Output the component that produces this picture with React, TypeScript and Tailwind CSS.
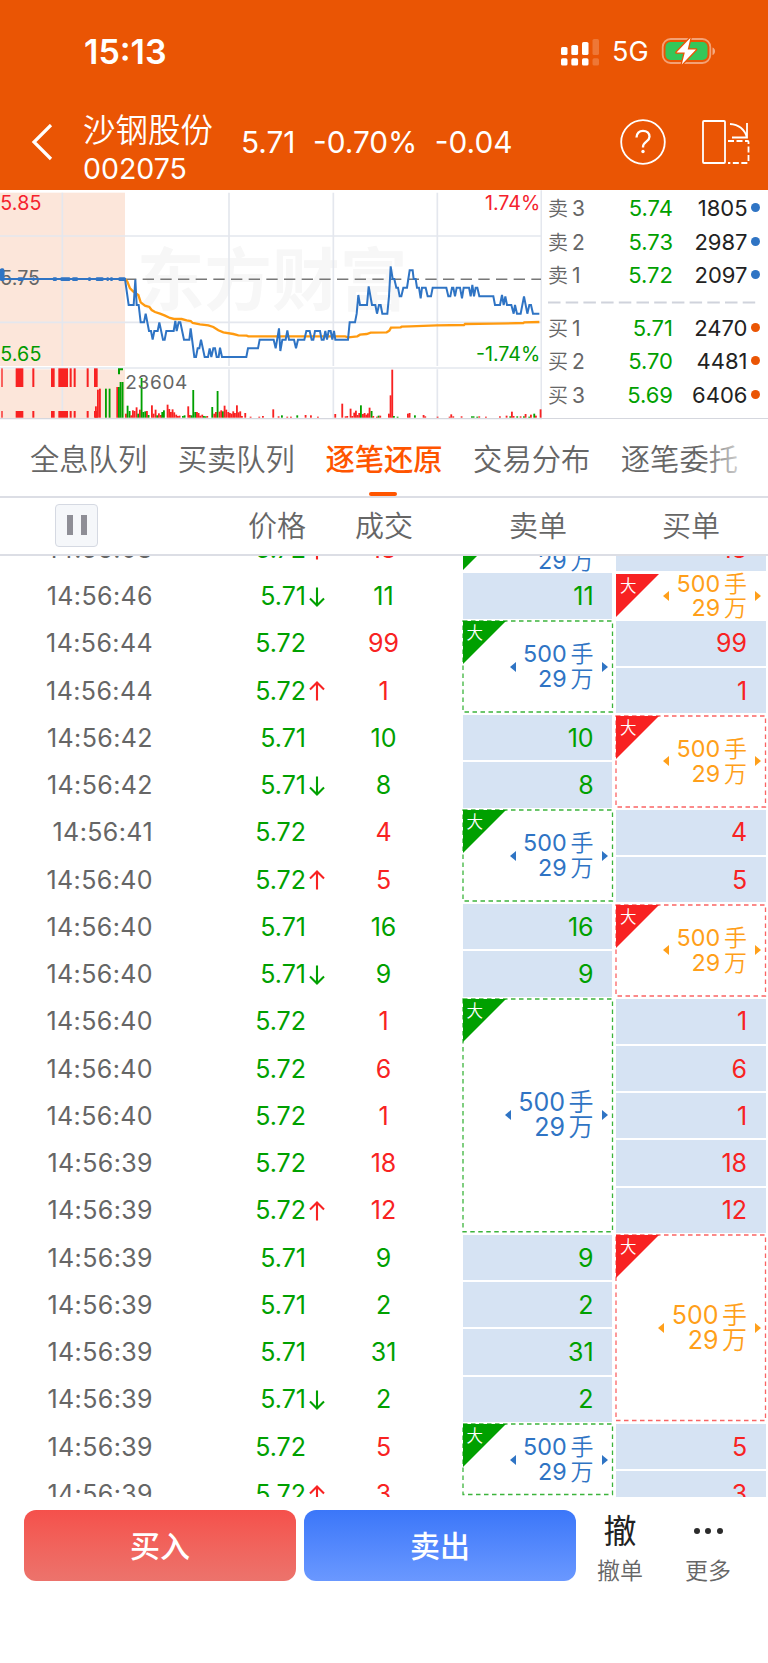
import { Fragment } from "react"

type Trade = { time: string; price: string; dir?: "up" | "down"; qty: string; side: "buy" | "sell" }

const trades: Trade[] = [
  { time: "14:56:08", price: "5.72", dir: "up", qty: "18", side: "buy" },
  { time: "14:56:46", price: "5.71", dir: "down", qty: "11", side: "sell" },
  { time: "14:56:44", price: "5.72", qty: "99", side: "buy" },
  { time: "14:56:44", price: "5.72", dir: "up", qty: "1", side: "buy" },
  { time: "14:56:42", price: "5.71", qty: "10", side: "sell" },
  { time: "14:56:42", price: "5.71", dir: "down", qty: "8", side: "sell" },
  { time: "14:56:41", price: "5.72", qty: "4", side: "buy" },
  { time: "14:56:40", price: "5.72", dir: "up", qty: "5", side: "buy" },
  { time: "14:56:40", price: "5.71", qty: "16", side: "sell" },
  { time: "14:56:40", price: "5.71", dir: "down", qty: "9", side: "sell" },
  { time: "14:56:40", price: "5.72", qty: "1", side: "buy" },
  { time: "14:56:40", price: "5.72", qty: "6", side: "buy" },
  { time: "14:56:40", price: "5.72", qty: "1", side: "buy" },
  { time: "14:56:39", price: "5.72", qty: "18", side: "buy" },
  { time: "14:56:39", price: "5.72", dir: "up", qty: "12", side: "buy" },
  { time: "14:56:39", price: "5.71", qty: "9", side: "sell" },
  { time: "14:56:39", price: "5.71", qty: "2", side: "sell" },
  { time: "14:56:39", price: "5.71", qty: "31", side: "sell" },
  { time: "14:56:39", price: "5.71", dir: "down", qty: "2", side: "sell" },
  { time: "14:56:39", price: "5.72", qty: "5", side: "buy" },
  { time: "14:56:39", price: "5.72", dir: "up", qty: "3", side: "buy" },
]

// a string is a single fill, a number is the height of a big order
type Slot = string | number

const sellSlots: Slot[] = [47.25, "11", 94.5, "10", "8", 94.5, "16", "9", 236.25, "9", "2", "31", "2", 74]
const buySlots: Slot[] = ["18", 47.25, "99", "1", 94.5, "4", "5", 94.5, "1", "6", "1", "18", "12", 189, "5", "3"]

const tabs = ["全息队列", "买卖队列", "逐笔还原", "交易分布", "逐笔委托"]

const asks = [["卖3", "5.74", "1805"], ["卖2", "5.73", "2987"], ["卖1", "5.72", "2097"]]
const bids = [["买1", "5.71", "2470"], ["买2", "5.70", "4481"], ["买3", "5.69", "6406"]]

const pricePath =
  "0,255 8,255 10,282 375,282 386,360 401,360 406,284 410,360 416,360 422,412 432,412 437,386 447,438 453,438 458,464 463,438 473,438 478,412 489,464 494,464 499,438 521,438 526,408 530,438 536,412 541,412 552,464 568,464 572,430 583,516 588,516 593,490 598,490 603,464 614,516 624,516 629,490 634,516 640,490 645,490 650,516 656,516 660,488 666,516 739,516 744,490 774,490 779,464 821,464 827,490 837,430 841,498 847,464 857,464 862,436 867,464 882,464 888,490 894,464 913,464 919,438 929,438 935,464 940,464 945,438 960,438 965,464 971,464 976,438 981,464 986,438 992,438 997,464 1002,438 1006,464 1044,464 1049,412 1065,412 1070,386 1075,330 1080,360 1101,360 1106,304 1116,360 1126,360 1131,386 1137,360 1142,360 1147,386 1162,386 1167,334 1172,244 1178,282 1183,282 1189,308 1194,308 1199,334 1204,334 1210,308 1221,308 1229,256 1238,256 1241,282 1247,282 1251,308 1257,308 1262,340 1266,308 1277,308 1283,334 1293,334 1298,308 1339,308 1345,334 1351,334 1356,308 1360,308 1365,334 1370,308 1380,308 1386,340 1391,308 1407,308 1412,334 1417,300 1422,334 1427,308 1432,308 1438,334 1480,334 1485,360 1500,360 1506,330 1511,360 1516,334 1521,360 1534,360 1541,386 1545,360 1551,386 1562,386 1572,334 1582,386 1588,360 1593,360 1599,386 1618,386"

const averagePath =
  "375,282 382,290 390,310 400,320 415,330 422,352 435,362 448,366 455,375 465,381 480,386 495,392 510,399 522,402 545,402 560,406 572,408 578,414 600,418 625,421 640,426 655,436 670,442 700,447 715,451 740,452 745,454 1035,454 1045,457 1072,454 1080,449 1100,447 1112,443 1160,442 1168,437 1173,428 1202,427 1205,425 1230,424 1310,421 1392,420 1395,417 1480,416 1570,414 1573,412 1618,411"

// call auction: x, width
const auctionBars = [[4, 4], [47, 23], [97, 6], [153, 11], [175, 29], [209, 6], [221, 6], [260, 6], [282, 11]]
const auctionDots = [[0, 14], [53, 17], [97, 7], [158, 13], [181, 30], [216, 18], [264, 9], [287, 24], [319, 8], [330, 9], [355, 22]]

// x, bar height, r = up / g = down
const volume: [number, number, string][] = [
  [285, 34, "r"], [291, 84, "r"], [297, 87, "r"], [315, 87, "g"], [326, 87, "g"], [349, 92, "r"], [354, 92, "g"], [359, 107, "g"], [365, 107, "g"],
  [375, 12, "r"], [380, 36, "g"], [386, 20, "g"], [391, 7, "r"], [396, 22, "r"], [401, 20, "r"], [407, 31, "r"], [412, 12, "g"], [417, 24, "r"], [422, 119, "g"], [427, 17, "g"], [433, 19, "g"], [438, 20, "r"], [443, 8, "g"], [453, 37, "r"], [458, 12, "r"], [464, 24, "r"], [469, 7, "g"], [474, 13, "r"], [480, 8, "r"], [484, 17, "g"], [489, 22, "g"], [500, 39, "r"], [505, 26, "r"], [510, 17, "r"], [515, 25, "r"], [520, 16, "r"], [526, 9, "r"], [531, 5, "r"], [536, 6, "r"], [546, 5, "g"], [551, 7, "g"], [562, 34, "r"], [567, 8, "r"], [572, 7, "g"], [577, 83, "g"], [583, 17, "g"], [588, 17, "r"], [593, 14, "r"], [598, 6, "r"], [604, 9, "r"], [609, 5, "g"], [614, 4, "g"], [619, 5, "r"], [634, 32, "g"], [640, 12, "r"], [645, 17, "r"], [650, 80, "g"], [656, 18, "r"], [661, 22, "r"], [666, 19, "g"], [671, 36, "r"], [676, 24, "r"], [682, 17, "r"], [687, 14, "r"], [692, 12, "r"], [697, 19, "r"], [702, 14, "r"], [708, 37, "r"], [713, 16, "r"], [718, 19, "r"], [723, 5, "r"], [733, 14, "r"], [749, 3, "r"], [775, 3, "r"], [786, 5, "r"], [817, 25, "r"], [833, 4, "r"], [843, 7, "g"], [859, 3, "r"], [870, 3, "r"], [889, 7, "g"], [914, 8, "r"], [930, 7, "r"], [951, 3, "r"],
  [1003, 11, "r"], [1024, 42, "r"], [1034, 4, "r"], [1039, 5, "r"], [1049, 27, "r"], [1054, 5, "r"], [1060, 15, "r"], [1065, 21, "r"], [1070, 8, "r"], [1075, 14, "r"], [1080, 37, "g"], [1086, 11, "r"], [1091, 14, "r"], [1096, 9, "r"], [1101, 13, "r"], [1106, 30, "r"], [1112, 20, "g"], [1117, 5, "r"], [1128, 3, "r"], [1133, 6, "g"], [1138, 6, "r"], [1164, 12, "r"], [1169, 67, "r"], [1174, 144, "r"], [1179, 5, "g"], [1190, 3, "g"], [1221, 12, "r"], [1226, 14, "r"], [1242, 7, "g"], [1268, 8, "r"], [1273, 4, "r"], [1310, 3, "r"], [1346, 3, "r"], [1351, 10, "r"], [1357, 4, "r"], [1382, 4, "r"], [1413, 4, "g"], [1418, 4, "g"], [1429, 3, "g"], [1435, 4, "r"], [1455, 3, "r"], [1497, 4, "r"], [1517, 6, "r"], [1528, 4, "g"], [1533, 18, "r"], [1538, 5, "r"], [1549, 4, "g"], [1559, 4, "r"], [1569, 4, "g"], [1574, 11, "r"], [1585, 3, "g"], [1590, 9, "r"], [1600, 12, "g"], [1605, 6, "r"], [1619, 25, "r"],
]

function StatusBar() {
  return (
    <div className="flex h-[96px] items-center justify-between pl-[84px] pr-[51px] pt-[7px]">
      <span className="text-[34px] font-semibold leading-none">15:13</span>
      <div className="flex items-center">
        <svg width="40" height="28" viewBox="0 0 40 28" fill="#fff">
          <rect x="1" y="9" width="6.5" height="8" rx="1.6" />
          <rect x="11.3" y="7" width="6.8" height="10" rx="1.6" />
          <rect x="22" y="4" width="6.5" height="13" rx="1.6" />
          <rect x="32.5" y="1" width="6.5" height="16" rx="1.6" opacity=".2" />
          <rect x="1" y="20.3" width="6.5" height="7.2" rx="1.6" />
          <rect x="11.3" y="20.3" width="6.8" height="7.2" rx="1.6" />
          <rect x="22" y="20.3" width="6.5" height="7.2" rx="1.6" />
          <rect x="32.5" y="20.3" width="6.5" height="7.2" rx="1.6" opacity=".2" />
        </svg>
        <span className="ml-[12px] w-[37px] text-[27px] leading-none">5G</span>
        <svg className="mb-[2px] ml-[12px]" width="56" height="28" viewBox="0 0 56 28">
          <rect x="1.7" y="2" width="47.6" height="24" rx="8" fill="none" stroke="#fff" strokeOpacity=".45" strokeWidth="1.8" />
          <path d="M51.5 10.5c3.4 1 3.4 6.5 0 7.5z" fill="#fff" fillOpacity=".5" />
          <rect x="4.5" y="5" width="42" height="18" rx="5" fill="#34c759" />
          <path d="M29.5.8 15.5 15.5h8.3L20.8 27.5 35 12.5h-8.3z" fill="#fff" stroke="#ea5504" strokeWidth="2.6" strokeLinejoin="round" paintOrder="stroke" />
        </svg>
      </div>
    </div>
  )
}

function TitleBar() {
  return (
    <div className="flex h-[94px] items-center pl-[31px]">
      <svg width="22" height="38" viewBox="0 0 22 38" fill="none" stroke="#fff" strokeWidth="3.2">
        <path d="M20 1 3 18l17 17" />
      </svg>
      <div className="ml-[30px] mt-[12px] w-[158px]">
        <div className="text-[32.5px] font-[350] leading-[39px]">沙钢股份</div>
        <div className="text-[28.5px] leading-[38px]">002075</div>
      </div>
      <div className="flex gap-[17.5px] pb-[1px] text-[29.8px]">
        <span>5.71</span>
        <span>-0.70%</span>
        <span>-0.04</span>
      </div>
      <div className="ml-auto flex items-center pb-[3px] pr-[17px]">
        <svg width="46" height="46" viewBox="0 0 46 46" fill="none" stroke="#fff">
          <circle cx="23" cy="23" r="21.8" strokeWidth="1.8" />
          <path d="M16.5 18.5c0-4.2 2.8-6.7 6.5-6.7 3.8 0 6.5 2.4 6.5 5.9 0 5-6.5 5-6.5 10.2v.6" strokeWidth="2.3" />
          <circle cx="23" cy="32.5" r="1.7" fill="#fff" stroke="none" />
        </svg>
        <svg className="ml-[35px]" width="50" height="46" viewBox="0 0 50 46" fill="none" stroke="#fff" strokeWidth="1.8">
          <rect x="2" y="2" width="22" height="42" rx="1" />
          <path d="M29 5c8 .5 14.5 5 17 13.5M46 4v14.5H31" />
          <path d="M27 22h19.5q1 0 1 1v20q0 1-1 1H27" strokeDasharray="6 2.5" />
        </svg>
      </div>
    </div>
  )
}

function MinuteChart() {
  return (
    <svg className="block shrink-0" width="542" height="230" viewBox="0 15 1626 690">
      <rect x="0" y="23" width="375" height="520" fill="#fce6da" />
      <rect x="0" y="553" width="375" height="146" fill="#fce6da" />
      <text x="410" y="360" fontSize="203" fontWeight="700" fill="#f7f7f7">东方财富</text>
      <g stroke="#e4e7ee" strokeWidth="5">
        <path d="M0 153H1623M0 412H1623M0 549H1623M187 23V543M687 23V543M1000 23V543M1312 23V543M187 553V699M687 553V699M1000 553V699M1312 553V699M1624 16V700" />
      </g>
      <path d="M0 701H1626" stroke="#d5d7de" strokeWidth="4" />
      <path d="M375 283H1623" stroke="#777" strokeWidth="4.5" strokeDasharray="34 19" />
      <g fontSize="59">
        <text x="1" y="74" fill="#f5222d" textLength="123">5.85</text>
        <text x="1" y="301" fill="#666">5.75</text>
        <text x="1" y="528" fill="#009a00" textLength="123">5.65</text>
        <text x="1621" y="74" fill="#f5222d" textAnchor="end">1.74%</text>
        <text x="1621" y="528" fill="#009a00" textAnchor="end">-1.74%</text>
      </g>
      {auctionBars.map(([x, w]) => (
        <Fragment key={x}>
          <rect x={x} y="550" width={w} height="56" fill="#f82222" />
          <rect x={x} y="678" width={w} height="20" fill="#f82222" />
        </Fragment>
      ))}
      <path d="M354 550h15v6h-9v12h-6z" fill="#00a000" />
      {volume.map(([x, h, c]) => (
        <rect key={x} x={x} y={698 - h} width="5.5" height={h} fill={c === "r" ? "#f82222" : "#00a000"} />
      ))}
      <text x="376" y="611" fontSize="57" fill="#666" textLength="186">23604</text>
      <polyline points={averagePath} fill="none" stroke="#ff9a0f" strokeWidth="7" />
      <polyline points={pricePath} fill="none" stroke="#2f74c4" strokeWidth="6" />
      {auctionDots.map(([x, w]) => (
        <rect key={x} x={x} y="277" width={w} height="11" rx="4" fill="#2f74c4" />
      ))}
      <rect x="0" y="250" width="13" height="34" rx="5" fill="#2f74c4" />
    </svg>
  )
}

function Quote({ row, dot }: { row: string[]; dot: string }) {
  return (
    <div className="flex h-[33.5px] items-center">
      <span className="w-[46px] text-[20px] font-[350] text-[#666]">
        {row[0][0]}
        <span className="ml-[4px] text-[21px] font-normal">{row[0][1]}</span>
      </span>
      <span className="w-[79px] text-right text-[22px] text-[#00a000]">{row[1]}</span>
      <span className="w-[74.5px] text-right text-[22px] text-[#222]">{row[2]}</span>
      <span className={`ml-[3.5px] mt-[-2px] h-[9px] w-[9px] rounded-full ${dot}`} />
    </div>
  )
}

function OrderBook() {
  return (
    <div className="h-[229px] flex-1 border-b border-[#d5d7de] pl-[6px] pt-[2px]">
      {asks.map((row) => (
        <Quote key={row[0]} row={row} dot="bg-[#2f74c4]" />
      ))}
      <svg className="block" width="208" height="19">
        <path d="M0 9.5H208" stroke="#d0d3dc" strokeWidth="2" strokeDasharray="12.5 5.2" />
      </svg>
      {bids.map((row) => (
        <Quote key={row[0]} row={row} dot="bg-[#ea5504]" />
      ))}
    </div>
  )
}

function Arrow({ dir }: { dir: "up" | "down" }) {
  return (
    <svg width="16" height="20" viewBox="0 0 16 20" fill="none" stroke={dir === "up" ? "#f82222" : "#00a000"} strokeWidth="2.1">
      <path d={dir === "up" ? "M8 19.5V2M1 8.5 8 1.5l7 7" : "M8 .5V18M1 11.5l7 7 7-7"} />
    </svg>
  )
}

function OrderColumn({ slots, side }: { slots: Slot[]; side: "buy" | "sell" }) {
  const sell = side === "sell"
  return (
    <div className="-mt-[31px] flex w-[149.5px] shrink-0 flex-col">
      {slots.map((slot, i) =>
        typeof slot === "string" ? (
          <div key={i} className="h-[47.25px] shrink-0 py-[1px]">
            <div className={`flex h-full items-center justify-end bg-[#d6e3f3] pr-[18.5px] pt-[2px] text-[25px] ${sell ? "text-[#00a000]" : "text-[#f82222]"}`}>
              {slot}
            </div>
          </div>
        ) : (
          <div key={i} className="shrink-0 pb-[2px] pt-[1.5px]" style={{ height: slot }}>
            <div className={`relative flex h-full items-center justify-end pr-[4.5px] ${sell ? "text-[#2f74c4]" : "text-[#ff9f1a]"}`}>
              {slot > 50 && (
                <svg className="absolute inset-0 h-full w-full overflow-visible" fill="none">
                  <rect x="0" y="0" width="100%" height="100%" stroke={sell ? "#3cb43c" : "#fa6464"} strokeWidth="1.3" strokeDasharray="4.5 3.5" />
                </svg>
              )}
              <svg className="absolute left-0 top-0" width="43" height="43">
                <path d="M0 0H43L0 43z" fill={sell ? "#00a000" : "#f82222"} />
              </svg>
              <span className="absolute left-[4px] top-[3px] text-[16.5px] font-[350] leading-[18px] text-white">大</span>
              <svg width="6" height="10" fill="currentColor"><path d="M6 0v10L0 5z" /></svg>
              <div className={`ml-[7.5px] mr-[8px] text-right font-[350] ${slot > 100 ? "text-[25px] leading-[25px]" : "pt-[1px] text-[23.3px] leading-[23.6px]"}`}>
                <div><span className="font-normal">500</span><span className={slot > 100 ? "ml-[3.5px]" : "ml-[4px] text-[23px]"}>手</span></div>
                <div><span className="font-normal">29</span><span className={slot > 100 ? "ml-[3.5px]" : "ml-[4px] text-[23px]"}>万</span></div>
              </div>
              <svg width="6" height="10" fill="currentColor"><path d="M0 0v10l6-5z" /></svg>
            </div>
          </div>
        )
      )}
    </div>
  )
}

function TradeList() {
  return (
    <div className="flex h-[940.5px] overflow-hidden">
      <div className="-mt-[30px] w-[462.6px] shrink-0 text-[25px]">
        {trades.map((t, i) => (
          <div key={i} className="flex h-[47.25px] items-center">
            <span className="w-[153px] text-right tracking-[0.4px] text-[#666]">{t.time}</span>
            <span className="w-[153px] text-right text-[#00a000]">{t.price}</span>
            <span className="flex w-[22.5px] pl-[3px]">{t.dir && <Arrow dir={t.dir} />}</span>
            <span className={`w-[110px] text-center ${t.side === "buy" ? "text-[#f82222]" : "text-[#00a000]"}`}>{t.qty}</span>
          </div>
        ))}
      </div>
      <OrderColumn slots={sellSlots} side="sell" />
      <div className="w-[4px] shrink-0" />
      <OrderColumn slots={buySlots} side="buy" />
    </div>
  )
}

export default function App() {
  return (
    <div className="h-[1663px] w-[768px] overflow-hidden bg-white font-['Inter','Noto_Sans_CJK_SC',sans-serif]">
      <header className="h-[190px] bg-[#ea5504] text-white">
        <StatusBar />
        <TitleBar />
      </header>

      <section className="flex h-[230px]">
        <MinuteChart />
        <OrderBook />
      </section>

      {/* Tabs */}
      <nav className="relative flex h-[78px] items-center justify-between border-b-2 border-[#dcdee5] pl-[30px] pr-[30px] text-[29.3px] font-[350] text-[#666]">
        {tabs.map((tab) =>
          tab === "逐笔还原" ? (
            <span key={tab} className="relative flex h-full items-center pt-[4px] font-medium text-[#ff5500]">
              {tab}
              <span className="absolute bottom-0 left-[44px] h-[4px] w-[28px] rounded-full bg-[#ff5500]" />
            </span>
          ) : (
            <span key={tab} className="pt-[4px]">{tab}</span>
          )
        )}
        <div className="absolute right-0 top-0 h-full w-[66px] bg-gradient-to-r from-white/0 to-white to-80%" />
      </nav>

      {/* Column titles */}
      <div className="flex h-[58px] items-center border-b-2 border-[#dcdee5] text-[29px] font-[350] text-[#666]">
        <div className="mb-[2px] ml-[55px] flex h-[43px] w-[43px] items-center justify-center gap-[8px] rounded-[4px] border border-[#d5d9e2] bg-[#f5f7fa]">
          <span className="h-[20px] w-[6px] bg-[#8e8e96]" />
          <span className="h-[20px] w-[6px] bg-[#8e8e96]" />
        </div>
        <span className="ml-[150px] w-[58px] pt-[2px]">价格</span>
        <span className="ml-[49px] w-[58px] pt-[2px]">成交</span>
        <span className="ml-[96px] w-[58px] pt-[2px]">卖单</span>
        <span className="ml-[95px] w-[58px] pt-[2px]">买单</span>
      </div>

      <TradeList />

      {/* Bottom actions */}
      <footer className="flex pl-[24px] pt-[13.5px]">
        <button className="h-[71px] w-[272px] rounded-[12px] bg-gradient-to-b from-[#f5504b] to-[#ec736c] pt-[2px] text-[30px] font-medium text-white">买入</button>
        <button className="ml-[8px] h-[71px] w-[272px] rounded-[12px] bg-gradient-to-b from-[#3b76f9] to-[#6a98ff] pt-[2px] text-[30px] font-medium text-white">卖出</button>
        <div className="ml-[10px] flex w-[68px] flex-col items-center">
          <span className="text-[33px] leading-[42px] text-[#222]">撤</span>
          <span className="pt-[1px] text-[23px] font-[350] leading-[36px] text-[#666]">撤单</span>
        </div>
        <div className="ml-[20px] flex w-[68px] flex-col items-center">
          <span className="flex h-[42px] items-center gap-[5.5px]">
            <i className="h-[6px] w-[6px] rounded-full bg-[#2b2b2b]" />
            <i className="h-[6px] w-[6px] rounded-full bg-[#2b2b2b]" />
            <i className="h-[6px] w-[6px] rounded-full bg-[#2b2b2b]" />
          </span>
          <span className="pt-[1px] text-[23px] font-[350] leading-[36px] text-[#666]">更多</span>
        </div>
      </footer>
    </div>
  )
}
